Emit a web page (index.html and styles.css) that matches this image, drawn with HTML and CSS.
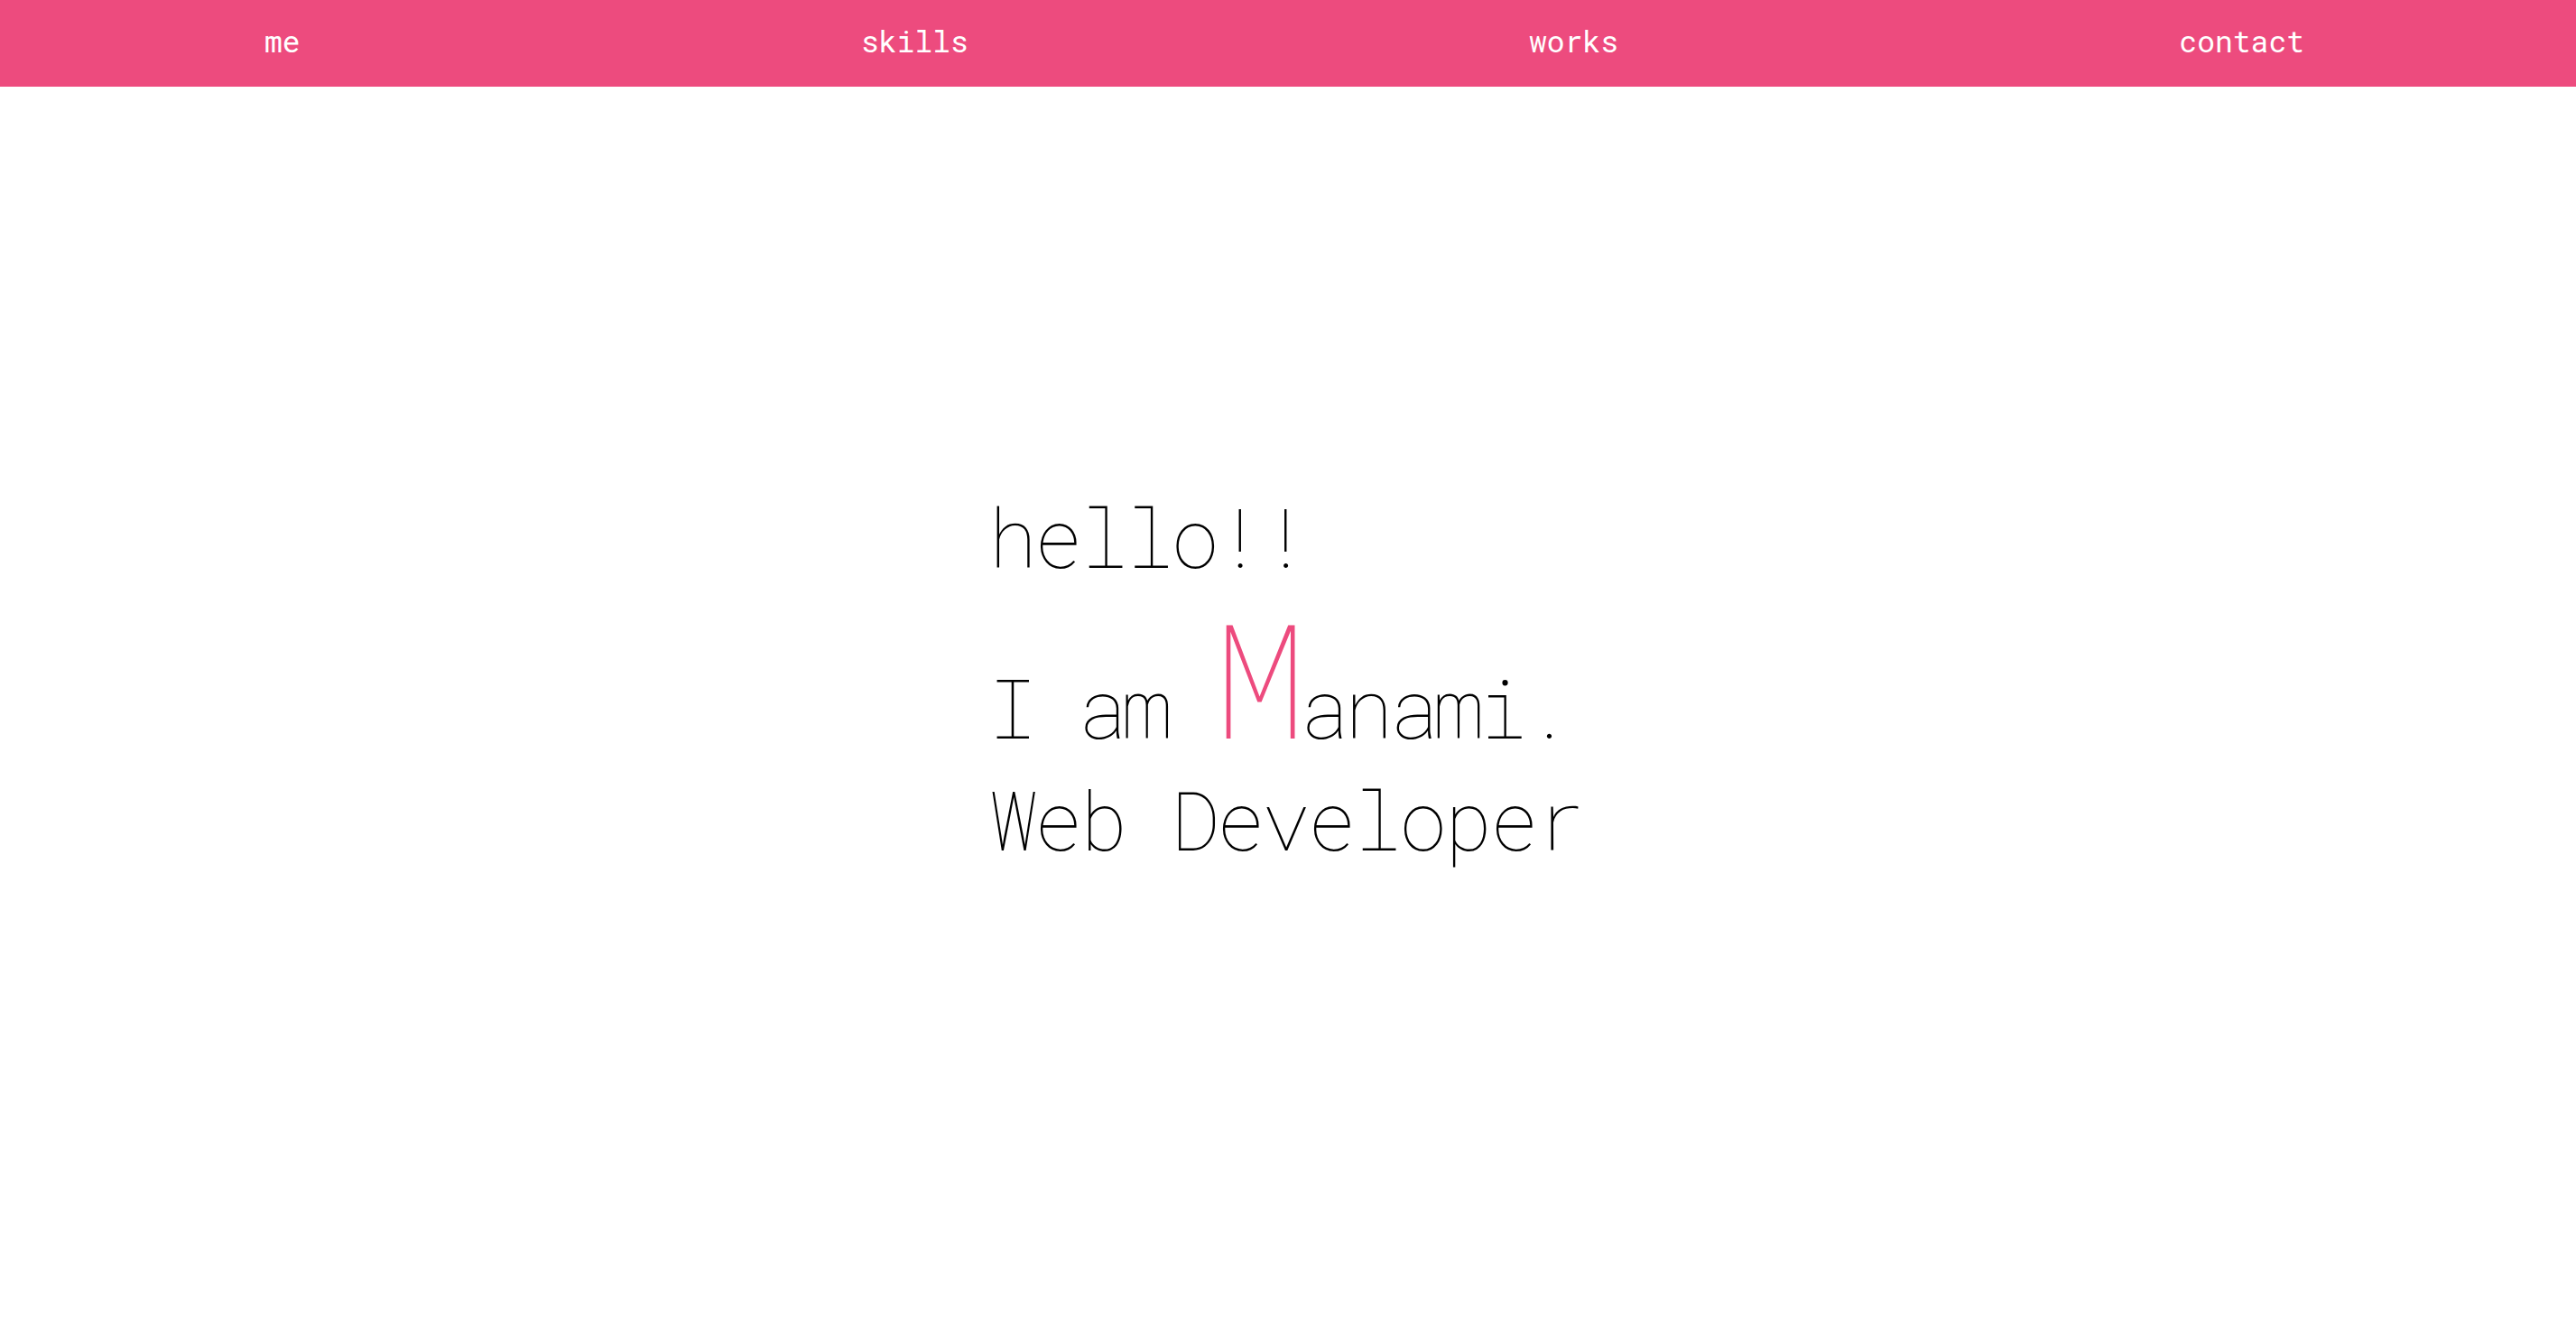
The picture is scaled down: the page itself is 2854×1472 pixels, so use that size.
FILE: index.html
```html
<!DOCTYPE html>
<html lang="en">
<head>
<meta charset="utf-8">
<title>Manami</title>
<link rel="stylesheet" href="styles.css">
</head>
<body>
<nav class="nav">
  <a class="nav-link" href="#me">me</a>
  <a class="nav-link" href="#skills">skills</a>
  <a class="nav-link" href="#works">works</a>
  <a class="nav-link" href="#contact">contact</a>
</nav>
<main class="hero">
  <h1 class="intro">
    <span class="line">hello!!</span>
    <span class="line line-name">I am <span class="initial">M</span>anami.</span>
    <span class="line">Web Developer</span>
  </h1>
</main>
</body>
</html>
```
FILE: styles.css
```css
html, body {
  margin: 0;
  padding: 0;
  background: #ffffff;
}
body {
  font-family: "Roboto Mono", "DejaVu Sans Mono", monospace;
  min-height: 100vh;
}
.nav {
  height: 96px;
  box-sizing: border-box;
  padding: 0 301px 6px 293px;
  background: #ed4b7e;
  display: flex;
  align-items: center;
  justify-content: space-between;
}
.nav-link {
  color: #ffffff;
  text-decoration: none;
  font-size: 33px;
  font-weight: 400;
  line-height: 1;
}
.hero {
  min-height: calc(100vh - 96px);
  box-sizing: border-box;
  padding: 0 7px 68px 0;
  display: flex;
  align-items: center;
  justify-content: center;
}
.intro {
  margin: 0;
  font-weight: 100;
  font-size: 90px;
  line-height: 124px;
  letter-spacing: -3.5px;
  color: #000000;
}
.line {
  display: block;
  white-space: pre;
}
.line-name {
  letter-spacing: -4.5px;
}
.initial {
  color: #ed4b7e;
  font-size: 176px;
  line-height: 189px;
  letter-spacing: -8px;
}
```
